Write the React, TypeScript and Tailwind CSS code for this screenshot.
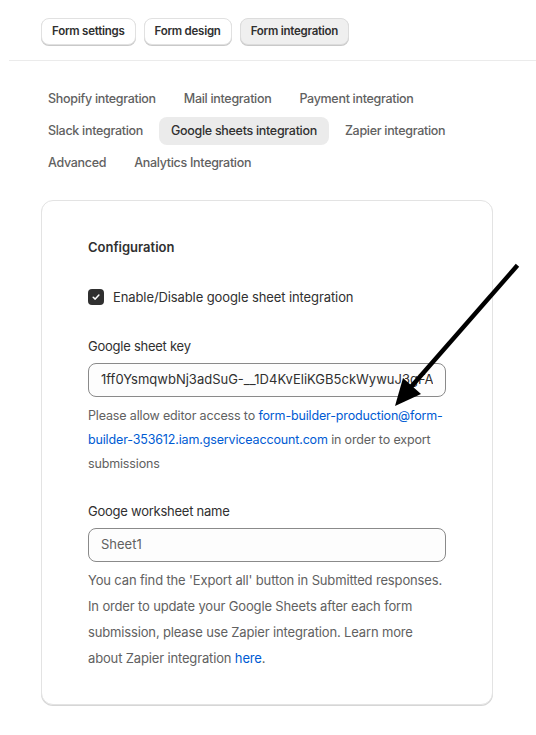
import React from 'react'

const TOP_TABS = ['Form settings', 'Form design', 'Form integration']
const SUB_TABS = [
  'Shopify integration',
  'Mail integration',
  'Payment integration',
  'Slack integration',
  'Google sheets integration',
  'Zapier integration',
  'Advanced',
  'Analytics Integration',
]

function Arrow() {
  // tip at (395,405), tail at (516,267)
  return (
    <svg className="pointer-events-none absolute left-0 top-0" width="536" height="735" viewBox="0 0 536 735">
      <line x1="516" y1="267" x2="410" y2="388" stroke="#000" strokeWidth="4.5" strokeLinecap="square" />
      <polygon points="395,406 421,394 403,378" fill="#000" />
    </svg>
  )
}

export default function App() {
  return (
    <div className="relative min-h-[735px] w-full bg-white text-[13px] text-[#303030]" style={{ fontFamily: 'Inter, "Noto Sans", sans-serif' }}>
      <div className="flex gap-2 px-[41px] pt-[18px]">
        {TOP_TABS.map((t, i) => (
          <button
            key={t}
            className={`h-[27px] rounded-lg border px-[10px] text-[11.5px] font-semibold tracking-[-0.25px] text-[#303030] shadow-[0_1px_0_#c9c9c9] ${
              i === 2 ? 'border-[#dcdcdc] bg-[#efefef]' : 'border-[#e1e1e1] bg-white'
            }`}
          >
            {t}
          </button>
        ))}
      </div>
      <div className="ml-[9px] mt-[15px] border-t border-[#ebebeb]" />

      <div className="flex flex-wrap gap-x-1 gap-y-1 px-[36px] pt-[24px]">
        {SUB_TABS.map((t) => (
          <div
            key={t}
            className={`flex h-7 items-center rounded-lg px-3 text-[12.5px] font-medium tracking-[-0.3px] ${
              t === 'Google sheets integration' ? 'bg-[#ebebeb] text-[#303030]' : 'text-[#616161]'
            }`}
          >
            {t}
          </div>
        ))}
      </div>

      <div className="ml-[41px] mt-[23px] w-[452px] rounded-xl border border-[#e3e3e3] bg-white px-[46px] pb-[33px] pt-[36px] shadow-[0_1px_0_#d6d6d6]">
        <p className="font-semibold leading-5">Configuration</p>

        <label className="mt-[30px] flex items-center gap-[9px] leading-5 tracking-[-0.1px]">
          <span className="flex h-4 w-4 items-center justify-center rounded-[4px] bg-[#303030]">
            <svg width="10" height="10" viewBox="0 0 10 10" fill="none">
              <path d="M2.2 5.2 4.2 7.1 7.9 3" stroke="#fff" strokeWidth="1.5" strokeLinecap="round" strokeLinejoin="round" />
            </svg>
          </span>
          Enable/Disable google sheet integration
        </label>

        <p className="mt-[29px] leading-5 tracking-[-0.25px]">Google sheet key</p>
        <div className="mt-[7px] flex h-[34px] items-center rounded-lg border border-[#8a8a8a] bg-[#fdfdfd] px-3 text-[#303030]">
          <span className="block overflow-hidden whitespace-nowrap">1ff0YsmqwbNj3adSuG-__1D4KvEliKGB5ckWywuJ3gFA8hZs</span>
        </div>
        <p className="mt-[7px] text-[12.5px] leading-6 tracking-[-0.15px] text-[#616161]">
          Please allow editor access to{' '}
          <span className="text-[#005bd3]">form-builder-production@form-builder-353612.iam.gserviceaccount.com</span> in
          order to export submissions
        </p>

        <p className="mt-[25px] leading-5 tracking-[-0.25px]">Googe worksheet name</p>
        <div className="mt-[7px] flex h-[34px] items-center rounded-lg border border-[#8a8a8a] bg-[#fdfdfd] px-3 text-[#616161]">
          Sheet1
        </div>
        <p className="mt-[5px] leading-[26px] tracking-[-0.15px] text-[#616161]">
          You can find the 'Export all' button in Submitted responses. In order to update your Google Sheets after each
          form submission, please use Zapier integration. Learn more about Zapier integration{' '}
          <span className="text-[#005bd3]">here</span>.
        </p>
      </div>

      <Arrow />
    </div>
  )
}
